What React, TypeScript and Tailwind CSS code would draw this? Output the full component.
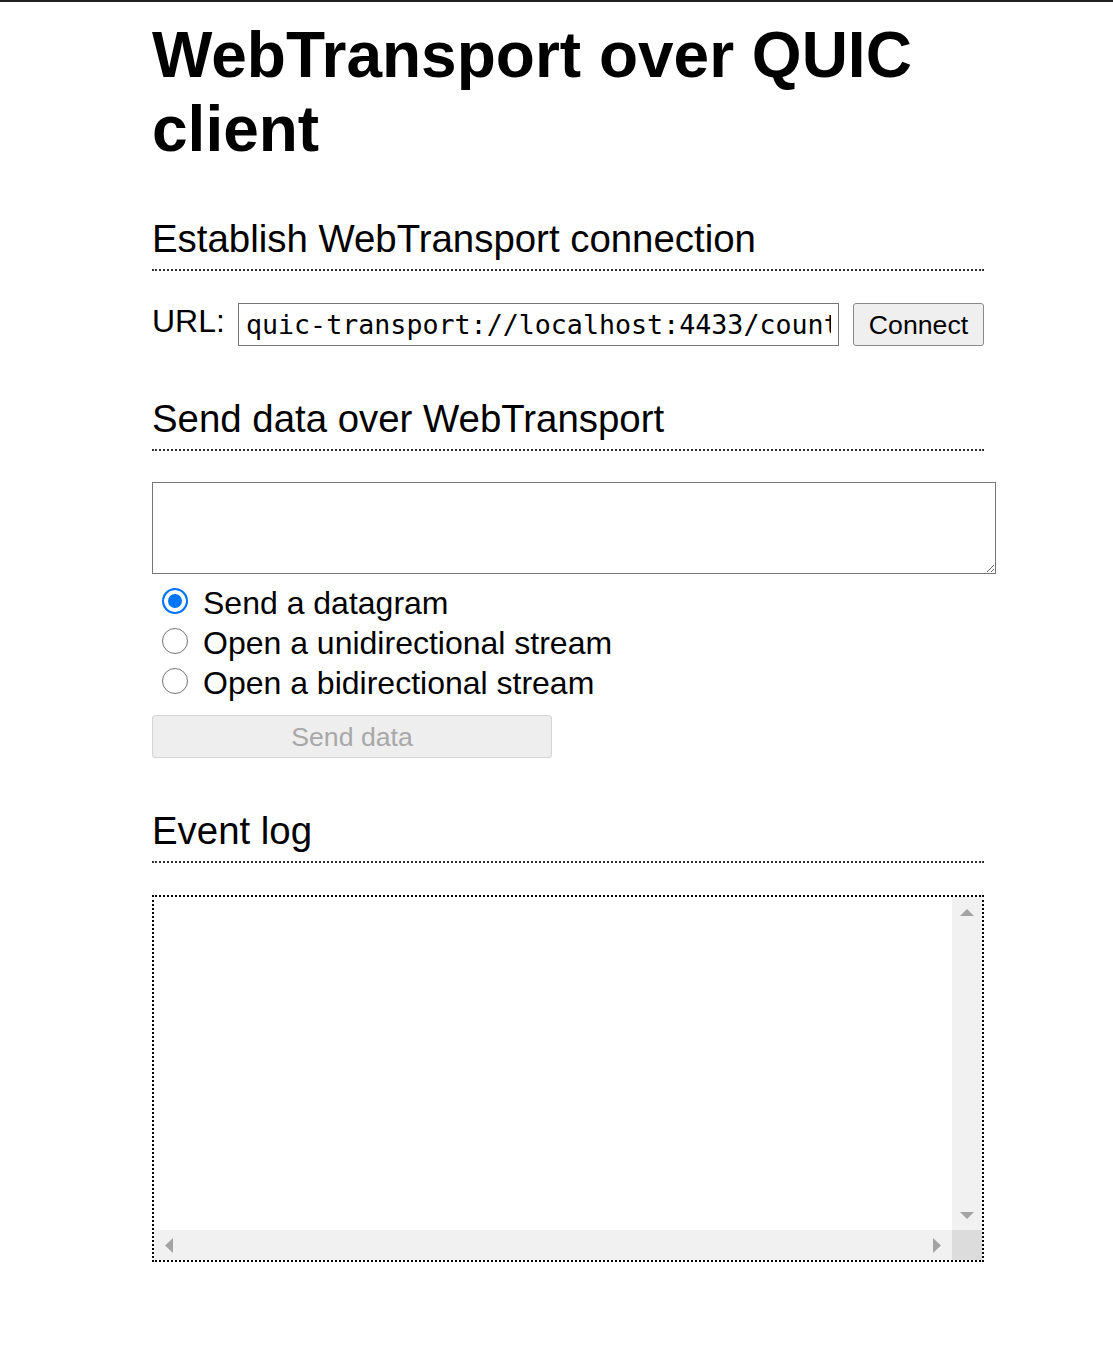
import React from "react";

type SendType = "datagram" | "unidi" | "bidi";

const SEND_TYPES: { value: SendType; label: string }[] = [
  { value: "datagram", label: "Send a datagram" },
  { value: "unidi", label: "Open a unidirectional stream" },
  { value: "bidi", label: "Open a bidirectional stream" },
];

const sans = "font-['Liberation_Sans',Arial,sans-serif]";
const mono = "font-['DejaVu_Sans_Mono','Liberation_Mono',monospace]";

function SectionTitle({ children }: { children: React.ReactNode }) {
  return (
    <h2 className="mt-[32px] mb-[32px] border-b-2 border-dotted border-[#333] pt-[19px] pb-[8px] text-[38.4px] leading-[44px] font-normal text-black">
      {children}
    </h2>
  );
}

function Arrow({ dir }: { dir: "up" | "down" | "left" | "right" }) {
  if (dir === "up") {
    return (
      <svg width="14" height="7" viewBox="0 0 14 7">
        <path d="M0 7 L7 0 L14 7 Z" fill="#a3a3a3" />
      </svg>
    );
  }
  if (dir === "down") {
    return (
      <svg width="14" height="7" viewBox="0 0 14 7">
        <path d="M0 0 L14 0 L7 7 Z" fill="#a3a3a3" />
      </svg>
    );
  }
  if (dir === "left") {
    return (
      <svg width="8" height="15" viewBox="0 0 8 15">
        <path d="M8 0 L8 15 L0 7.5 Z" fill="#a3a3a3" />
      </svg>
    );
  }
  return (
    <svg width="8" height="15" viewBox="0 0 8 15">
      <path d="M0 0 L8 7.5 L0 15 Z" fill="#a3a3a3" />
    </svg>
  );
}

function EventLog() {
  return (
    <div className="flex h-[367px] w-[832px] flex-col border-2 border-dotted border-black">
      <div className="flex min-h-0 flex-1">
        <ul className={`flex-1 ${mono} text-[26px]`} />
        <div className="flex w-[30px] flex-col items-center justify-between bg-[#f1f1f1] pt-[12px] pb-[11px]">
          <Arrow dir="up" />
          <Arrow dir="down" />
        </div>
      </div>
      <div className="flex h-[30px]">
        <div className="flex flex-1 items-center justify-between bg-[#f1f1f1] pl-[11px] pr-[11px]">
          <Arrow dir="left" />
          <Arrow dir="right" />
        </div>
        <div className="w-[30px] bg-[#dcdcdc]" />
      </div>
    </div>
  );
}

export default function App() {
  const [url, setUrl] = React.useState("quic-transport://localhost:4433/counter");
  const [data, setData] = React.useState("");
  const [sendType, setSendType] = React.useState<SendType>("datagram");

  return (
    <div className={`min-h-[1356px] border-t-2 border-[#222] bg-white ${sans} text-black`}>
      <div className="ml-[152px] flex w-[832px] flex-col pt-[17px]">
        <h1 className="text-[64px] leading-[73.6px] font-bold">WebTransport over QUIC client</h1>

        <SectionTitle>Establish WebTransport connection</SectionTitle>

        <div className="flex h-[43px]">
          <label htmlFor="url" className="text-[32px] leading-[37px]">
            URL:
          </label>
          <input
            id="url"
            type="text"
            value={url}
            onChange={(event) => setUrl(event.target.value)}
            className={`mr-[14px] ml-[13px] min-w-0 flex-1 border border-[#767676] bg-white px-[7px] ${mono} text-[26.67px] text-black outline-none`}
          />
          <button
            type="button"
            className="w-[131px] rounded-[3px] border border-[#8a8a8a] bg-[#efefef] text-[26.67px] text-black"
          >
            Connect
          </button>
        </div>

        <SectionTitle>Send data over WebTransport</SectionTitle>

        <textarea
          value={data}
          onChange={(event) => setData(event.target.value)}
          className={`-mt-[1px] block h-[92px] w-[844px] border border-[#767676] px-[4px] py-[4px] ${mono} text-[26px] outline-none`}
        />

        <div className="mt-[9px] flex flex-col">
          {SEND_TYPES.map((item) => (
            <div key={item.value} className="flex h-[40px] items-start">
              <input
                type="radio"
                id={item.value}
                name="sendtype"
                checked={sendType === item.value}
                onChange={() => setSendType(item.value)}
                className="mt-[5px] ml-[10px] h-[26px] w-[26px] shrink-0 appearance-none rounded-full border-[1.5px] border-[#767676] bg-white checked:border-2 checked:border-[#0075ff] checked:bg-[#0075ff] checked:shadow-[inset_0_0_0_4px_white]"
              />
              <label htmlFor={item.value} className="ml-[15px] text-[32px] leading-[40px]">
                {item.label}
              </label>
            </div>
          ))}
        </div>

        <button
          type="button"
          disabled
          className="mt-[12px] h-[43px] w-[400px] rounded-[3px] border border-[#d4d4d4] bg-[#eeeeee] text-[26.67px] text-[#a8a8a8]"
        >
          Send data
        </button>

        <SectionTitle>Event log</SectionTitle>

        <EventLog />
      </div>
    </div>
  );
}
